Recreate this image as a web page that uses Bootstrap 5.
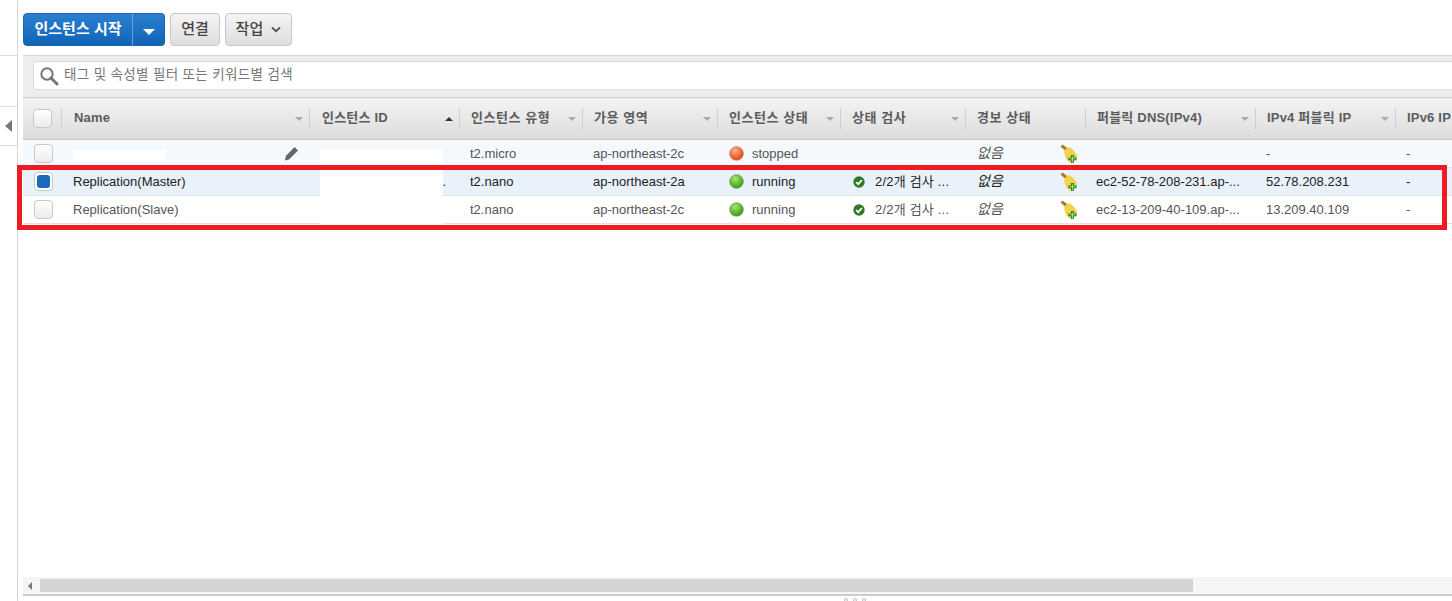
<!DOCTYPE html>
<html lang="ko">
<head>
  <meta charset="UTF-8" />
  <meta name="viewport" content="width=device-width, initial-scale=1" />
  <title>인스턴스</title>
  <link href="https://cdn.jsdelivr.net/npm/bootstrap@5.3.0/dist/css/bootstrap.min.css" rel="stylesheet" />
  <style>
    html, body { height: 100%; }
    body {
      font-family: "Liberation Sans", "Noto Sans CJK KR", sans-serif;
      font-size: 13px;
      color: #444;
      overflow: hidden;
    }
    .page-wrap { height: 601px; position: relative; }

    /* left rail */
    .side-rail { width: 18px; flex: none; border-right: 1px solid #d5d5d5; }
    .side-gap { height: 55px; }
    .side-tab { height: 52px; border-top: 1px solid #ddd; border-bottom: 1px solid #ddd; }
    .side-arrow { width: 0; height: 0; border-style: solid; border-width: 6px 7px 6px 0; border-color: transparent #777 transparent transparent; }
    .side-tab2 { height: 39px; border-bottom: 1px solid #ddd; }

    .main-area { margin-left: 5px; min-width: 0; }

    /* toolbar */
    .tool-bar { height: 55px; padding-top: 13px; }
    .aws-btn {
      height: 33px;
      padding: 0 0 2px;
      font-size: 15px;
      font-weight: 500;
      color: #444;
      background: linear-gradient(#f4f4f4, #dedede);
      border: 1px solid #c6c6c6;
      border-radius: 4px;
      line-height: 28px;
    }
    .aws-primary { color: #fff; font-weight: 700; background: linear-gradient(#2b7fd0, #1063b5); border-color: #1a66b0; }
    .aws-primary:hover, .aws-btn:hover { color: inherit; }
    .start-btn { width: 110px; border-radius: 4px 0 0 4px; }
    .caret-btn { width: 33px; padding: 0; border-left-color: #6a9fd4; border-radius: 0 4px 4px 0; }
    .caret-down { display: inline-block; width: 0; height: 0; border-style: solid; border-width: 6px 6px 0; border-color: #fff transparent transparent; }
    .btn-connect { width: 50px; margin-left: 5px; }
    .btn-action { width: 67px; margin-left: 5px; }

    /* search */
    .filter-bar { height: 42px; background: #ededed; border-top: 1px solid #d4d4d4; padding: 5px 0 7px 10px; width: 1500px; }
    .search-box { height: 29px; background: #fff; border: 1px solid #dcdcdc; border-radius: 4px; padding-left: 5px; gap: 5px; }
    .search-box input { border: 0; outline: 0; padding: 0; flex: 1; font-size: 13.5px; letter-spacing: .35px; background: transparent; }
    .search-box input::placeholder { color: #777; opacity: 1; }

    /* instance table */
    .inst-table { table-layout: fixed; width: 1500px; margin: 0; font-size: 13px; color: #444; }
    .c-check { width: 39px; } .c-name { width: 248px; } .c-id { width: 150px; } .c-type { width: 123px; }
    .c-zone { width: 135px; } .c-state { width: 123px; } .c-status { width: 125px; } .c-alarm { width: 120px; }
    .c-dns { width: 170px; } .c-ip4 { width: 140px; } .c-ip6 { width: 127px; }
    .inst-table thead th {
      height: 42px;
      padding: 0;
      vertical-align: middle;
      background: linear-gradient(#f3f3f3, #dcdcdc);
      border-top: 1px solid #d0d0d0;
      border-bottom: 1px solid #c8c8c8;
      font-size: 13px;
      font-weight: 600;
      color: #5c5c5c;
      box-shadow: none;
    }
    .head-cell { height: 21px; margin-left: -1px; border-left: 1px solid #cfcfcf; padding: 0 7px 0 11px; }
    .head-first { padding-left: 12px; }
    .head-title { letter-spacing: .2px; white-space: nowrap; margin-top: -2px; }
    .head-ko { letter-spacing: .55px; }
    .sort-down, .sort-up { width: 0; height: 0; border-style: solid; border-left: 4px solid transparent; border-right: 4px solid transparent; }
    .sort-down { border-top: 4px solid #aaa; border-bottom: 0; }
    .sort-up { border-bottom: 4px solid #333; border-top: 0; }
    .inst-table tbody td {
      height: 28px;
      padding: 0 0 0 10px;
      vertical-align: middle;
      border-bottom: 1px solid #e2e2e2;
      border-top: 0;
      white-space: nowrap;
      overflow: hidden;
      box-shadow: none;
      background: transparent;
      color: #555;
    }
    .inst-table tbody tr.row-hover { background: #f4f9fd; }
    .inst-table tbody tr.row-picked { background: #e9f1fb; }
    .inst-table tbody tr.row-picked td { color: #222; }
    .inst-table tbody td.cell-check { padding-left: 11px; }
    .inst-table tbody td.cell-name { padding-left: 11px; }
    .inst-table tbody td.cell-state { padding-left: 11px; }
    .inst-table tbody td.cell-status { padding-left: 12px; }
    .inst-table tbody td.cell-alarm { padding: 0 8px 0 11px; }
    .inst-table tbody td.cell-id { padding: 0 14px 0 0; text-align: right; }
    .no-alarm { font-style: italic; font-size: 14px; }
    .head-check { margin-left: 10px; }
    .check-gap { gap: 10px; letter-spacing: .2px; }
    .pencil-icon { margin-right: 11px; }

    .pick-box { display: block; width: 19px; height: 19px; border: 1px solid #c9c9c9; border-radius: 4px; background: linear-gradient(#fff, #ececec); }
    .pick-on { background: #fff; padding: 2px; }
    .pick-on i { display: block; width: 13px; height: 13px; margin: 0; border-radius: 3px; background: #1a6bbd; }

    /* overlays: masked ids and the red marker from the original capture */
    .mask-id { position: absolute; left: 320px; top: 149px; width: 123px; height: 75px; background: #fff; }
    .mask-name { position: absolute; left: 73px; top: 150px; width: 93px; height: 10px; background: #fff; }
    .red-frame { position: absolute; left: 17px; top: 165px; width: 1430px; height: 65px; border: 5px solid #ed1c24; }

    /* scrollbar */
    .scroll-track { height: 19px; background: #f5f5f5; border-bottom: 2px solid #ccc; padding: 1px 0 1px 5px; width: 1429px; }
    .scroll-arrow { width: 0; height: 0; margin-right: 8px; border-style: solid; border-width: 4px 4px 4px 0; border-color: transparent #777 transparent transparent; }
    .scroll-thumb { width: 1153px; height: 13px; background: #d3d3d3; }
    .drag-dots { height: 5px; gap: 5px; padding-left: 821px; padding-top: 2px; }
    .drag-dots i { display: block; width: 4px; height: 4px; border: 1px solid #bbb; border-radius: 50%; }
  </style>
</head>
<body>
  <svg width="0" height="0" class="position-absolute">
    <defs>
      <radialGradient id="dotGreen" cx="40%" cy="30%" r="75%">
        <stop offset="0" stop-color="#a5e57c" /><stop offset=".6" stop-color="#5fb52f" /><stop offset="1" stop-color="#3d8f1b" />
      </radialGradient>
      <radialGradient id="dotRed" cx="40%" cy="30%" r="75%">
        <stop offset="0" stop-color="#fbb795" /><stop offset=".6" stop-color="#ee6a39" /><stop offset="1" stop-color="#d4461d" />
      </radialGradient>
      <symbol id="dotG" viewBox="0 0 16 16"><circle cx="8" cy="8" r="7.3" fill="url(#dotGreen)" stroke="#4a9a24" stroke-width=".6" /></symbol>
      <symbol id="dotR" viewBox="0 0 16 16"><circle cx="8" cy="8" r="7.3" fill="url(#dotRed)" stroke="#d2532a" stroke-width=".6" /></symbol>
      <symbol id="okIcon" viewBox="0 0 12 12">
        <circle cx="6" cy="6" r="5.7" fill="#2c7a25" />
        <path d="M3.2 6.2 5.2 8.2 8.9 4" fill="none" stroke="#fff" stroke-width="1.8" />
      </symbol>
      <symbol id="broomIcon" viewBox="0 0 18 20">
        <path d="M.5 2.500 2.500 .5 8.500 5 6 7.500Z" fill="#a47e2a" />
        <path d="M4.500 6 9 3C13 5.500 16.500 9 17.500 13L11.500 19.500C6.500 17.500 3.800 11.500 4.500 6Z" fill="#f3d148" />
        <path d="M11 11h2.800v2.400h2.700v2.800h-2.700v2.600h-2.800v-2.600h-2.600v-2.800h2.600z" fill="#1d7d1d" />
        <path d="M11.900 12.200h1v2.100h2.500v1h-2.500v2.400h-1v-2.400h-2.400v-1h2.400z" fill="#a5ee8e" />
      </symbol>
    </defs>
  </svg>

  <div class="page-wrap d-flex">
    <aside class="side-rail">
      <div class="side-gap"></div>
      <div class="side-tab"></div>
      <div class="side-tab2 d-flex align-items-center justify-content-center"><span class="side-arrow"></span></div>
    </aside>

    <main class="main-area flex-grow-1 d-flex flex-column overflow-hidden">
      <div class="tool-bar d-flex align-items-start">
        <div class="btn-group">
          <button type="button" class="btn aws-btn aws-primary start-btn">인스턴스 시작</button>
          <button type="button" class="btn aws-btn aws-primary caret-btn"><span class="caret-down"></span></button>
        </div>
        <button type="button" class="btn aws-btn btn-connect">연결</button>
        <button type="button" class="btn aws-btn btn-action">작업 <svg class="ms-1" width="10" height="7" viewBox="0 0 10 7"><path d="M1 1.500 5 5.200 9 1.500" fill="none" stroke="#555" stroke-width="1.800" /></svg></button>
      </div>

      <div class="filter-bar">
        <div class="search-box d-flex align-items-center">
          <svg width="20" height="20" viewBox="0 0 20 20"><circle cx="8" cy="8" r="5.700" fill="#fff" stroke="#777" stroke-width="2" /><path d="M12 12 18 18" stroke="#777" stroke-width="3" stroke-linecap="round" /></svg>
          <input type="text" placeholder="태그 및 속성별 필터 또는 키워드별 검색" aria-label="검색" />
        </div>
      </div>

      <table class="table inst-table">
        <colgroup>
          <col class="c-check" /><col class="c-name" /><col class="c-id" /><col class="c-type" /><col class="c-zone" /><col class="c-state" />
          <col class="c-status" /><col class="c-alarm" /><col class="c-dns" /><col class="c-ip4" /><col class="c-ip6" />
        </colgroup>
        <thead>
          <tr>
            <th><span class="pick-box head-check"></span></th>
            <th><div class="head-cell head-first d-flex align-items-center justify-content-between"><span class="head-title">Name</span><span class="sort-down"></span></div></th>
            <th><div class="head-cell head-first d-flex align-items-center justify-content-between"><span class="head-title">인스턴스 ID</span><span class="sort-up"></span></div></th>
            <th><div class="head-cell d-flex align-items-center justify-content-between"><span class="head-title head-ko">인스턴스 유형</span><span class="sort-down"></span></div></th>
            <th><div class="head-cell d-flex align-items-center justify-content-between"><span class="head-title head-ko">가용 영역</span><span class="sort-down"></span></div></th>
            <th><div class="head-cell d-flex align-items-center justify-content-between"><span class="head-title head-ko">인스턴스 상태</span><span class="sort-down"></span></div></th>
            <th><div class="head-cell d-flex align-items-center justify-content-between"><span class="head-title head-ko">상태 검사</span><span class="sort-down"></span></div></th>
            <th><div class="head-cell d-flex align-items-center justify-content-between"><span class="head-title head-ko">경보 상태</span></div></th>
            <th><div class="head-cell d-flex align-items-center justify-content-between"><span class="head-title">퍼블릭 DNS(IPv4)</span><span class="sort-down"></span></div></th>
            <th><div class="head-cell d-flex align-items-center justify-content-between"><span class="head-title">IPv4 퍼블릭 IP</span><span class="sort-down"></span></div></th>
            <th><div class="head-cell d-flex align-items-center justify-content-between"><span class="head-title">IPv6 IP</span></div></th>
          </tr>
        </thead>
        <tbody>
          <tr class="row-hover">
            <td class="cell-check"><span class="pick-box"></span></td>
            <td class="cell-name"><div class="d-flex justify-content-end"><svg class="pencil-icon" width="15" height="15" viewBox="0 0 15 15"><path d="M10.500 1 14 4.500 5 13.500 1 14.500 1.800 10Z" fill="#666" /></svg></div></td>
            <td class="cell-id"></td>
            <td>t2.micro</td>
            <td>ap-northeast-2c</td>
            <td class="cell-state"><div class="d-flex align-items-center gap-2"><svg width="15" height="15"><use href="#dotR" /></svg>stopped</div></td>
            <td></td>
            <td class="cell-alarm"><div class="d-flex align-items-center justify-content-between"><span class="no-alarm">없음</span><svg width="18" height="20"><use href="#broomIcon" /></svg></div></td>
            <td></td>
            <td>-</td>
            <td>-</td>
          </tr>
          <tr class="row-picked">
            <td class="cell-check"><span class="pick-box pick-on"><i></i></span></td>
            <td class="cell-name">Replication(Master)</td>
            <td class="cell-id">.</td>
            <td>t2.nano</td>
            <td>ap-northeast-2a</td>
            <td class="cell-state"><div class="d-flex align-items-center gap-2"><svg width="15" height="15"><use href="#dotG" /></svg>running</div></td>
            <td class="cell-status"><div class="d-flex align-items-center check-gap"><svg width="12" height="12"><use href="#okIcon" /></svg>2/2개 검사 ...</div></td>
            <td class="cell-alarm"><div class="d-flex align-items-center justify-content-between"><span class="no-alarm">없음</span><svg width="18" height="20"><use href="#broomIcon" /></svg></div></td>
            <td>ec2-52-78-208-231.ap-...</td>
            <td>52.78.208.231</td>
            <td>-</td>
          </tr>
          <tr>
            <td class="cell-check"><span class="pick-box"></span></td>
            <td class="cell-name">Replication(Slave)</td>
            <td class="cell-id"></td>
            <td>t2.nano</td>
            <td>ap-northeast-2c</td>
            <td class="cell-state"><div class="d-flex align-items-center gap-2"><svg width="15" height="15"><use href="#dotG" /></svg>running</div></td>
            <td class="cell-status"><div class="d-flex align-items-center check-gap"><svg width="12" height="12"><use href="#okIcon" /></svg>2/2개 검사 ...</div></td>
            <td class="cell-alarm"><div class="d-flex align-items-center justify-content-between"><span class="no-alarm">없음</span><svg width="18" height="20"><use href="#broomIcon" /></svg></div></td>
            <td>ec2-13-209-40-109.ap-...</td>
            <td>13.209.40.109</td>
            <td>-</td>
          </tr>
        </tbody>
      </table>

      <div class="flex-grow-1"></div>
      <div class="scroll-track d-flex align-items-center">
        <span class="scroll-arrow"></span>
        <span class="scroll-thumb"></span>
      </div>
      <div class="drag-dots d-flex"><i></i><i></i><i></i></div>
    </main>

    <div class="mask-id"></div>
    <div class="mask-name"></div>
    <div class="red-frame"></div>
  </div>
  <script src="https://cdn.jsdelivr.net/npm/bootstrap@5.3.0/dist/js/bootstrap.bundle.min.js"></script>
</body>
</html>
